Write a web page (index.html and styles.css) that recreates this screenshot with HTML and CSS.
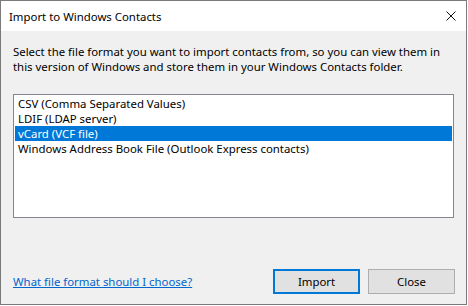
FILE: index.html
```html
<!DOCTYPE html>
<html>
<head>
<meta charset="utf-8">
<link rel="stylesheet" href="styles.css">
</head>
<body>
<div class="dialog">
  <div class="titlebar">
    <span class="title">Import to Windows Contacts</span>
    <svg class="close-x" width="10" height="10" viewBox="0 0 10 10"><path d="M0.5 0.5 L9.5 9.5 M9.5 0.5 L0.5 9.5" stroke="#111" stroke-width="1" fill="none"/></svg>
  </div>
  <div class="content">
    <p class="desc">Select the file format you want to import contacts from, so you can view them in this version of Windows and store them in your Windows Contacts folder.</p>
    <div class="listbox">
      <div class="item">CSV (Comma Separated Values)</div>
      <div class="item">LDIF (LDAP server)</div>
      <div class="item selected">vCard (VCF file)</div>
      <div class="item">Windows Address Book File (Outlook Express contacts)</div>
    </div>
    <div class="footer">
      <a class="help" href="#">What file format should I choose?</a>
      <div class="buttons">
        <button class="btn default">Import</button>
        <button class="btn">Close</button>
      </div>
    </div>
  </div>
</div>
</body>
</html>
```
FILE: styles.css
```css
html, body {
  margin: 0;
  padding: 0;
  background: #ffffff;
}
.dialog {
  box-sizing: border-box;
  width: 467px;
  height: 305px;
  border: 1px solid #7a7a7a;
  background: #f0f0f0;
  display: flex;
  flex-direction: column;
  font-family: "Noto Sans", "Open Sans", sans-serif;
  font-size: 11.4px;
  color: #000;
}
.titlebar {
  height: 30px;
  background: #ffffff;
  display: flex;
  align-items: center;
  justify-content: space-between;
  padding: 0 10px 0 8px;
}
.title {
  font-size: 11.4px;
  color: #000;
}
.close-x {
  display: block;
}
.content {
  flex: 1;
  display: flex;
  flex-direction: column;
  padding: 13px 12px 10px 12px;
}
.desc {
  margin: 0;
  line-height: 15px;
  width: 440px;
}
.listbox {
  margin-top: 20px;
  width: 441px;
  height: 124px;
  box-sizing: border-box;
  border: 1px solid #828790;
  background: #ffffff;
  padding: 1px;
}
.item {
  height: 15px;
  line-height: 15px;
  padding-left: 3px;
  white-space: nowrap;
}
.item.selected {
  background: #0078d7;
  color: #ffffff;
}
.footer {
  margin-top: auto;
  display: flex;
  align-items: center;
  justify-content: space-between;
  width: 442px;
}
.help {
  color: #0066cc;
  text-decoration: underline;
  font-size: 11.4px;
}
.buttons {
  display: flex;
  gap: 8px;
}
.btn {
  box-sizing: border-box;
  width: 87px;
  height: 25px;
  background: #e1e1e1;
  border: 1px solid #adadad;
  font-family: "Noto Sans", "Open Sans", sans-serif;
  font-size: 11.4px;
  color: #000;
  padding: 0;
  margin: 0;
}
.btn.default {
  border: 2px solid #0078d7;
}
```
